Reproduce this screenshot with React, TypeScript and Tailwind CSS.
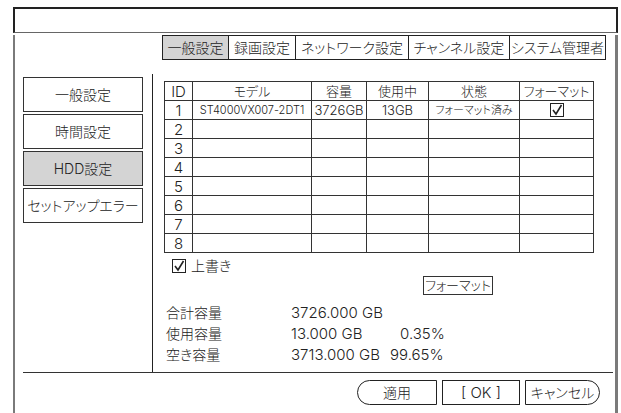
import React from "react";

const tabs = [
  { label: "一般設定", w: "w-[67px]", active: true },
  { label: "録画設定", w: "w-[67px]", active: false },
  { label: "ネットワーク設定", w: "w-[113px]", active: false },
  { label: "チャンネル設定", w: "w-[101px]", active: false },
  { label: "システム管理者", w: "w-[96px]", active: false },
];

const menu = [
  { label: "一般設定", active: false },
  { label: "時間設定", active: false },
  { label: "HDD設定", active: true },
  { label: "セットアップエラー", active: false },
];

// 8 slots, only slot 1 has a disk
const rows = [1, 2, 3, 4, 5, 6, 7, 8];

function CheckBox() {
  return (
    <svg width="14" height="14" viewBox="0 0 14 14" className="block">
      <rect x="0.5" y="0.5" width="13" height="13" fill="white" stroke="#222" strokeWidth="1" />
      <path d="M3 7 L6 11 L11.5 2" fill="none" stroke="#222" strokeWidth="1.6" />
    </svg>
  );
}

export default function App() {
  return (
    <div className="w-[621px] h-[413px] bg-white overflow-hidden text-[#222] font-light font-['Inter','Noto_Sans_CJK_JP',sans-serif] [font-feature-settings:'palt']">
      <div className="ml-[13px] mt-[7px] w-[605px]">
        {/* タイトル帯 */}
        <div className="h-[26px] border-t-2 border-x-2 border-[#222] border-b border-b-[#666]" />

        <div className="h-[380px] border-l-2 border-r-[3px] border-[#7a7a7a]">
          {/* タブ */}
          <div className="flex ml-[147px] mt-[2px] h-[25px]">
            {tabs.map((t, i) => (
              <div
                key={t.label}
                className={`${t.w} flex items-center justify-center border-y border-r border-[#222] text-[14px] leading-none ${
                  i === 0 ? "border-l" : ""
                } ${t.active ? "bg-[#d4d4d4]" : "bg-white"}`}
              >
                {t.label}
              </div>
            ))}
          </div>

          {/* 本体 */}
          <div className="flex ml-[8px] mr-[2px] mt-[14px] h-[299px] border-b border-[#333]">
            <div className="w-[120px] pt-[3px] flex flex-col gap-[2px]">
              {menu.map((m) => (
                <div
                  key={m.label}
                  className={`h-[35px] flex items-center justify-center border border-[#333] text-[14px] leading-none ${
                    m.active ? "bg-[#d4d4d4]" : "bg-white"
                  }`}
                >
                  {m.label}
                </div>
              ))}
            </div>

            <div className="ml-[9px] flex-1 border-l border-[#222] pl-[11px] pt-[7px]">
              <table className="table-fixed w-[429px] border-collapse border border-[#333] text-center">
                <colgroup>
                  <col className="w-[28px]" />
                  <col className="w-[119px]" />
                  <col className="w-[55px]" />
                  <col className="w-[62px]" />
                  <col className="w-[91px]" />
                  <col className="w-[74px]" />
                </colgroup>
                <thead>
                  <tr className="h-[19px] text-[13px] leading-none">
                    <th className="font-light border border-[#333] p-0 text-[15px]">ID</th>
                    <th className="font-light border border-[#333] p-0">モデル</th>
                    <th className="font-light border border-[#333] p-0">容量</th>
                    <th className="font-light border border-[#333] p-0">使用中</th>
                    <th className="font-light border border-[#333] p-0">状態</th>
                    <th className="font-light border border-[#333] p-0 whitespace-nowrap">フォーマット</th>
                  </tr>
                </thead>
                <tbody>
                  {rows.map((n) => (
                    <tr key={n} className="h-[19px] leading-none">
                      <td className="border border-[#333] p-0 text-[15px]">{n}</td>
                      <td className="border border-[#333] p-0 text-[11px] whitespace-nowrap">
                        {n === 1 ? "ST4000VX007-2DT1" : ""}
                      </td>
                      <td className="border border-[#333] p-0 text-[13px]">{n === 1 ? "3726GB" : ""}</td>
                      <td className="border border-[#333] p-0 text-[13px]">{n === 1 ? "13GB" : ""}</td>
                      <td className="border border-[#333] p-0 text-[11px] whitespace-nowrap">
                        {n === 1 ? "フォーマット済み" : ""}
                      </td>
                      <td className="border border-[#333] p-0">
                        {n === 1 && (
                          <div className="flex justify-center">
                            <CheckBox />
                          </div>
                        )}
                      </td>
                    </tr>
                  ))}
                </tbody>
              </table>

              <div className="flex items-center mt-[5px] ml-[8px] h-[16px]">
                <CheckBox />
                <span className="ml-[5px] text-[14px] leading-none">上書き</span>
              </div>

              <div className="ml-[259px] mt-[2px] w-[70px] h-[19px] flex items-center justify-center border border-[#333] text-[13px] leading-none">
                フォーマット
              </div>

              <div className="mt-[7px] grid grid-cols-[125px_99px_70px] text-[15px] leading-[21px] pl-[2px]">
                <span className="text-[14px]">合計容量</span>
                <span>3726.000 GB</span>
                <span />
                <span className="text-[14px]">使用容量</span>
                <span>13.000 GB</span>
                <span className="pl-[10px]">0.35%</span>
                <span className="text-[14px]">空き容量</span>
                <span>3713.000 GB</span>
                <span>99.65%</span>
              </div>
            </div>
          </div>

          {/* ボタン */}
          <div className="flex justify-end gap-[5px] mt-[7px] pr-[15px]">
            <button className="w-[80px] h-[25px] border border-[#222] rounded-l-full bg-white text-[14px] leading-none">
              適用
            </button>
            <button className="w-[78px] h-[25px] border border-[#222] bg-white text-[15px] leading-none">
              [ OK ]
            </button>
            <button className="w-[75px] h-[25px] border border-[#222] rounded-r-full bg-white text-[14px] leading-none">
              キャンセル
            </button>
          </div>
        </div>
      </div>
    </div>
  );
}
